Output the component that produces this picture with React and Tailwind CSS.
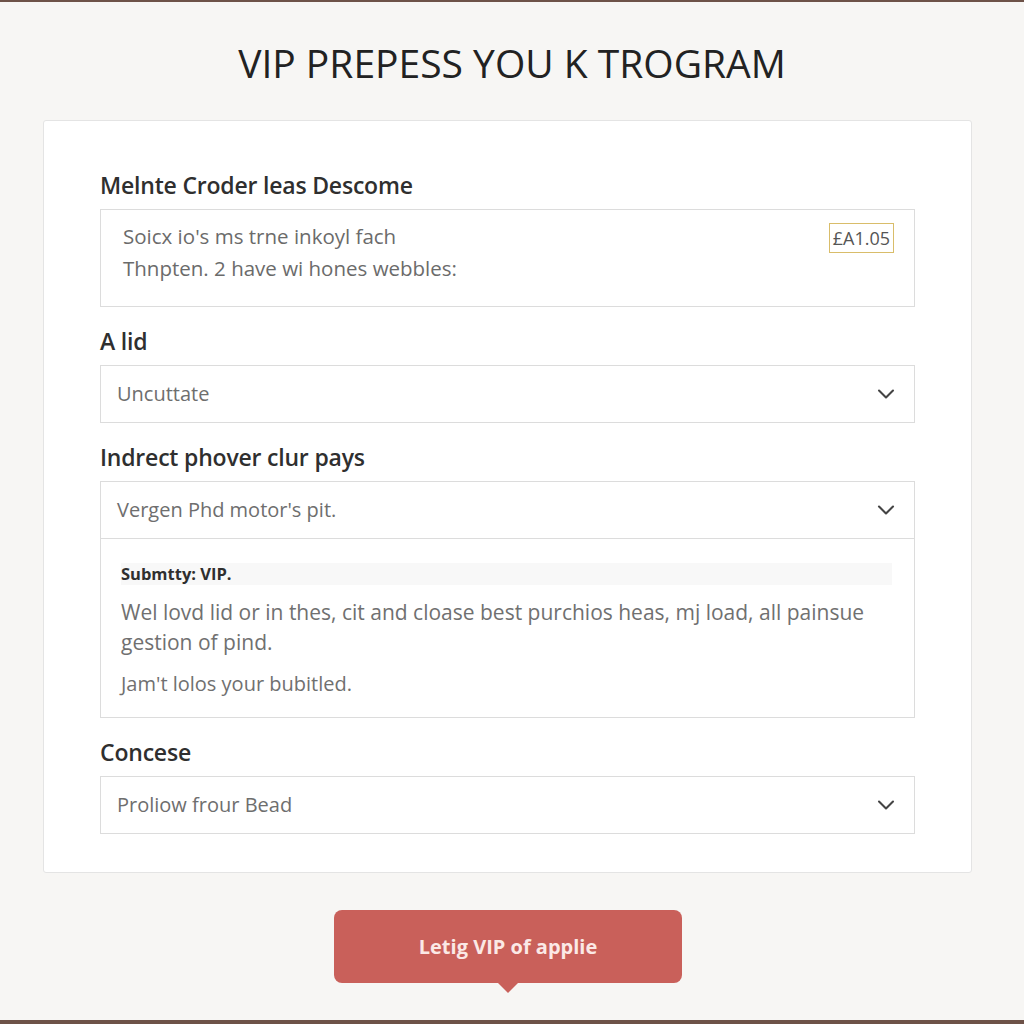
import { ChevronDown } from 'lucide-react';

const font = { fontFamily: '"Open Sans", "Liberation Sans", sans-serif' };

const Label = ({ children, className = '' }) => (
  <div className={`text-[23px] font-semibold text-[#2f2f2f] leading-[28px] tracking-[-0.2px] ${className}`}>{children}</div>
);

const Select = ({ value, className = '' }) => (
  <div className={`flex items-center justify-between h-[58px] border border-[#dcdcdc] bg-white pl-[16px] pr-[14px] ${className}`}>
    <span className="text-[20px] text-[#6e6e6e]">{value}</span>
    <ChevronDown className="w-7 h-7 text-[#444]" strokeWidth={1.8} />
  </div>
);

const App = () => {
  return (
    <div
      className="min-h-screen h-[1024px] bg-[#f7f6f4] border-t-2 border-b-4 border-[#6d5248] flex flex-col items-center"
      style={font}
    >
      <h1 className="mt-[38px] text-[39px] leading-[46px] font-normal text-[#222]">
        VIP PREPESS YOU K TROGRAM
      </h1>

      <div className="mt-[34px] mr-[9px] w-[929px] bg-white border border-[#e4e4e4] rounded-[3px] px-[56px] pt-[50px] pb-[38px]">
        <Label>Melnte Croder leas Descome</Label>
        <div className="mt-[10px] h-[98px] border border-[#dcdcdc] pl-[22px] pr-[20px] pt-[10px] flex justify-between">
          <div className="text-[20.5px] text-[#6b6b6b] leading-[32px]">
            <div>Soicx io's ms trne inkoyl fach</div>
            <div>Thnpten. 2 have wi hones webbles:</div>
          </div>
          <div className="self-start mt-[3px] h-[30px] px-[3px] border border-[#d9bd6a] text-[18px] text-[#555] leading-[28px]">
            £A1.05
          </div>
        </div>

        <Label className="mt-[20px]">A lid</Label>
        <Select value="Uncuttate" className="mt-[10px]" />

        <Label className="mt-[20px]">Indrect phover clur pays</Label>
        <Select value="Vergen Phd motor's pit." className="mt-[10px]" />
        <div className="border border-t-0 border-[#dcdcdc] h-[179px] px-[20px] pt-[24px]">
          <div className="bg-[#f8f8f8] h-[22px] text-[16.5px] font-bold text-[#2f2f2f] leading-[22px] mr-[2px]">Submtty: VIP.</div>
          <p className="mt-[12px] text-[21px] text-[#707070] leading-[30px]">
            Wel lovd lid or in thes, cit and cloase best purchios heas, mj load, all painsue gestion of pind.
          </p>
          <p className="mt-[12px] text-[20px] text-[#707070] leading-[30px]">Jam't lolos your bubitled.</p>
        </div>

        <Label className="mt-[20px]">Concese</Label>
        <Select value="Proliow frour Bead" className="mt-[10px]" />
      </div>

      <div className="relative mt-[37px] mr-[8px]">
        <button className="w-[348px] h-[73px] rounded-[8px] bg-[#c9605a] text-[#fbe9e6] text-[20px] font-bold">
          Letig VIP of applie
        </button>
        <div className="absolute left-1/2 -translate-x-1/2 top-[72px] w-0 h-0 border-l-[11px] border-r-[11px] border-t-[11px] border-l-transparent border-r-transparent border-t-[#c9605a]" />
      </div>
    </div>
  );
};

export default App;
